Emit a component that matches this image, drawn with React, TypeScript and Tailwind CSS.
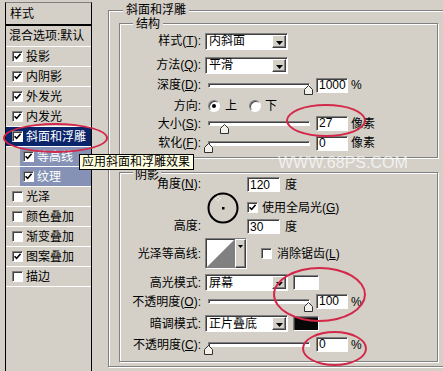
import React from "react";

const sunken =
  "border border-t-[#808080] border-l-[#808080] border-b-white border-r-white shadow-[inset_1px_1px_0_#404040]";
const raised =
  "border border-t-white border-l-white border-b-[#404040] border-r-[#404040] shadow-[inset_-1px_-1px_0_#808080]";
const etched = "border border-[#808080] shadow-[inset_1px_1px_0_#fff,1px_1px_0_#fff]";

function Check({ on }: { on?: boolean }) {
  return (
    <span className={`flex h-[11px] w-[11px] shrink-0 items-center justify-center bg-white ${sunken}`}>
      {on && (
        <svg width="7" height="7" viewBox="0 0 7 7">
          <path d="M0.5 3.2 L2.6 5.4 L6.6 0.8" stroke="#000" strokeWidth="1.6" fill="none" />
        </svg>
      )}
    </span>
  );
}

function Label({ t, k, colon = true }: { t: string; k?: string; colon?: boolean }) {
  return (
    <>
      {t}
      {k && (
        <>
          (<u>{k}</u>)
        </>
      )}
      {colon && ":"}
    </>
  );
}

function Select({ value }: { value: string }) {
  return (
    <div className={`ml-[4px] flex h-[17px] w-[83px] items-center bg-white ${sunken}`}>
      <span className="flex-1 pl-[3px] leading-[14px]">{value}</span>
      <span className={`mr-[1px] flex h-[13px] w-[14px] items-end justify-center bg-[#d4d0c8] pb-[2px] ${raised}`}>
        <svg width="7" height="4" viewBox="0 0 7 4">
          <path d="M0 0 H7 L3.5 4 Z" fill="#000" />
        </svg>
      </span>
    </div>
  );
}

function Field({ value }: { value: string }) {
  return (
    <div className={`flex h-[15px] w-[32px] items-center bg-white pl-[2px] leading-[13px] ${sunken}`}>{value}</div>
  );
}

function Slider({ thumb }: { thumb: string }) {
  return (
    <div className="relative ml-[3px] flex h-[18px] w-[108px] items-center">
      <div className={`ml-[4px] h-[5px] w-[102px] bg-white ${sunken}`} />
      <svg className={`absolute top-[9px] ${thumb}`} width="9" height="10" viewBox="0 0 9 10">
        <path d="M0.5 4.5 L4.5 0.5 L8.5 4.5 V9.5 H0.5 Z" fill="#f2f1ec" stroke="#303030" />
      </svg>
    </div>
  );
}

function Row({ className, label, children }: { className: string; label: React.ReactNode; children?: React.ReactNode }) {
  return (
    <div className={`flex items-center ${className}`}>
      <span className="w-[81px] whitespace-nowrap text-right">{label}</span>
      {children}
    </div>
  );
}

function Radio({ on }: { on?: boolean }) {
  return (
    <span className="flex h-[12px] w-[12px] items-center justify-center rounded-full border border-t-[#808080] border-l-[#808080] border-b-white border-r-white bg-white shadow-[inset_1px_1px_0_#404040]">
      {on && <span className="h-[4px] w-[4px] rounded-full bg-black" />}
    </span>
  );
}

const list = [
  { t: "投影", on: true },
  { t: "内阴影", on: true },
  { t: "外发光", on: true },
  { t: "内发光", on: true },
];
const listBottom = [
  { t: "光泽", on: false },
  { t: "颜色叠加", on: false },
  { t: "渐变叠加", on: false },
  { t: "图案叠加", on: true },
  { t: "描边", on: false },
];

export default function App() {
  return (
    <div className="relative flex h-[371px] w-[443px] items-start overflow-hidden bg-[#d4d0c8] font-['Liberation_Sans','Noto_Sans_CJK_SC',sans-serif] text-[12px] leading-[14px] text-black">
      {/* style list */}
      <div className="ml-[5px] mt-[2px] flex h-[380px] w-[87px] shrink-0 flex-col border-x border-t border-x-black border-t-[#808080]">
        <div className="flex h-[23px] items-center border-b-2 border-black pl-[4px]">样式</div>
        <div className="flex h-[21px] items-center border-b border-white pl-[3px]">混合选项:默认</div>
        {list.map((r) => (
          <div key={r.t} className="flex h-[20px] items-center gap-[3px] border-b border-white pl-[6px]">
            <Check on={r.on} />
            {r.t}
          </div>
        ))}
        <div className="flex h-[20px] items-center gap-[3px] border-b border-white bg-[#0a246a] pl-[6px] text-white">
          <Check on />
          斜面和浮雕
        </div>
        <div className="flex h-[20px] items-center border-b border-white pl-[14px]">
          <div className="flex h-full flex-1 items-center gap-[3px] bg-[#8592b5] pl-[3px] text-white">
            <Check on />
            等高线
          </div>
        </div>
        <div className="flex h-[20px] items-center border-b border-white pl-[14px]">
          <div className="flex h-full flex-1 items-center gap-[3px] bg-[#8592b5] pl-[3px] text-white">
            <Check on />
            纹理
          </div>
        </div>
        {listBottom.map((r) => (
          <div key={r.t} className="flex h-[20px] items-center gap-[3px] border-b border-white pl-[6px]">
            <Check on={r.on} />
            {r.t}
          </div>
        ))}
      </div>

      {/* bevel and emboss panel */}
      <div className={`relative ml-[16px] mt-[10px] h-[357px] w-[345px] shrink-0 pl-[10px] pt-[12px] ${etched}`}>
        <span className="absolute left-[14px] top-[-8px] bg-[#d4d0c8] px-[3px]">斜面和浮雕</span>

        {/* structure */}
        <div className={`relative flex w-[319px] flex-col pb-[5px] ${etched}`}>
          <span className="absolute left-[13px] top-[-7px] bg-[#d4d0c8] px-[3px]">结构</span>
          <Row className="mt-[7px] h-[20px]" label={<Label t="样式" k="T" />}>
            <Select value="内斜面" />
          </Row>
          <Row className="mt-[4px] h-[20px]" label={<Label t="方法" k="Q" />}>
            <Select value="平滑" />
          </Row>
          <Row className="h-[20px]" label={<Label t="深度" k="D" />}>
            <Slider thumb="left-[100px]" />
            <div className="ml-[4px]"><Field value="1000" /></div>
            <span className="ml-[3px]">%</span>
          </Row>
          <Row className="mt-[2px] h-[18px]" label={<Label t="方向" />}>
            <span className="ml-[7px]"><Radio on /></span>
            <span className="ml-[5px]">上</span>
            <span className="ml-[12px]"><Radio /></span>
            <span className="ml-[4px]">下</span>
          </Row>
          <Row className="h-[17px]" label={<Label t="大小" k="S" />}>
            <Slider thumb="left-[16px]" />
            <div className="ml-[4px]"><Field value="27" /></div>
            <span className="ml-[3px]">像素</span>
          </Row>
          <Row className="mt-[2px] h-[18px]" label={<Label t="软化" k="F" />}>
            <Slider thumb="left-0" />
            <div className="ml-[4px]"><Field value="0" /></div>
            <span className="ml-[3px]">像素</span>
          </Row>
        </div>

        {/* shading */}
        <div className={`relative mt-[14px] flex w-[319px] flex-col pb-[6px] ${etched}`}>
          <span className="absolute left-[13px] top-[-4px] bg-[#d4d0c8] px-[2px] leading-[12px]">阴影</span>
          <div className="mt-[4px] flex h-[57px]">
            <div className="relative z-10 flex w-[81px] flex-col text-right">
              <span className="h-[15px] leading-[15px]"><Label t="角度" k="N" /></span>
              <span className="mt-[27px] h-[15px] leading-[15px]"><Label t="高度" /></span>
            </div>
            <svg className="ml-[6px] mt-[15px]" width="32" height="32" viewBox="0 0 32 32">
              <circle cx="16" cy="16" r="14.5" fill="none" stroke="#000" strokeWidth="2" />
              <rect x="15" y="15" width="2.5" height="2.5" fill="#000" />
              <path d="M11 3.5 V9.5 M8 6.5 H14" stroke="#f4f4f4" strokeWidth="1" />
              <rect x="10.5" y="6" width="1" height="1" fill="#606060" />
            </svg>
            <div className="ml-[8px] flex flex-col">
              <div className="flex h-[15px] items-center">
                <div className={`flex h-[15px] w-[33px] items-center bg-white pl-[2px] ${sunken}`}>120</div>
                <span className="ml-[5px]">度</span>
              </div>
              <div className="mt-[8px] flex h-[15px] items-center gap-[4px]">
                <Check on />
                <span><Label t="使用全局光" k="G" colon={false} /></span>
              </div>
              <div className="mt-[4px] flex h-[15px] items-center">
                <div className={`flex h-[15px] w-[33px] items-center bg-white pl-[2px] ${sunken}`}>30</div>
                <span className="ml-[5px]">度</span>
              </div>
            </div>
          </div>
          <Row className="mt-[4px] h-[31px]" label={<Label t="光泽等高线" />}>
            <div className={`ml-[4px] flex h-[31px] w-[42px] bg-white ${sunken}`}>
              <svg className="shrink-0" width="29" height="29" viewBox="0 0 29 29">
                <polygon points="0,29 29,0 29,29" fill="#808080" />
              </svg>
              <div className={`flex flex-1 justify-center bg-[#d4d0c8] pt-[5px] ${raised}`}>
                <svg width="5" height="3" viewBox="0 0 5 3">
                  <path d="M0 0 H5 L2.5 3 Z" fill="#000" />
                </svg>
              </div>
            </div>
            <span className="ml-[14px]"><Check /></span>
            <span className="ml-[5px]"><Label t="消除锯齿" k="L" colon={false} /></span>
          </Row>
          <Row className="mt-[4px] h-[19px]" label={<Label t="高光模式" />}>
            <Select value="屏幕" />
            <div className={`ml-[5px] h-[15px] w-[26px] bg-white ${sunken}`} />
          </Row>
          <Row className="h-[19px]" label={<Label t="不透明度" k="O" />}>
            <Slider thumb="left-[100px]" />
            <div className="ml-[4px]"><Field value="100" /></div>
            <span className="ml-[3px]">%</span>
          </Row>
          <Row className="mt-[2px] h-[21px]" label={<Label t="暗调模式" />}>
            <Select value="正片叠底" />
            <div className={`ml-[5px] h-[15px] w-[26px] bg-[#080808] ${sunken}`} />
          </Row>
          <Row className="h-[21px]" label={<Label t="不透明度" k="C" />}>
            <Slider thumb="left-0" />
            <div className="ml-[4px]"><Field value="0" /></div>
            <span className="ml-[3px]">%</span>
          </Row>
        </div>
      </div>

      {/* tooltip */}
      <div className="absolute left-[79px] top-[154px] flex h-[16px] w-[115px] items-center whitespace-nowrap border border-black bg-[#ffffe1] pl-[2px]">
        应用斜面和浮雕效果
      </div>

      {/* watermark */}
      <div className="absolute left-[278px] top-[154px] font-['Liberation_Sans',sans-serif] text-[16px] leading-[18px] text-white/70">
        WWW.68PS.COM
      </div>

      {/* red marks */}
      <div className="absolute left-[3px] top-[123px] h-[30px] w-[105px] rounded-[50%] border-2 border-[#d3284a]" />
      <div className="absolute left-[286px] top-[104px] h-[33px] w-[80px] rounded-[50%] border-2 border-[#d3284a]" />
      <div className="absolute left-[273px] top-[267px] h-[55px] w-[93px] rounded-[50%] border-2 border-[#d3284a]" />
      <div className="absolute left-[302px] top-[331px] h-[35px] w-[65px] rounded-[50%] border-2 border-[#d3284a]" />
    </div>
  );
}
